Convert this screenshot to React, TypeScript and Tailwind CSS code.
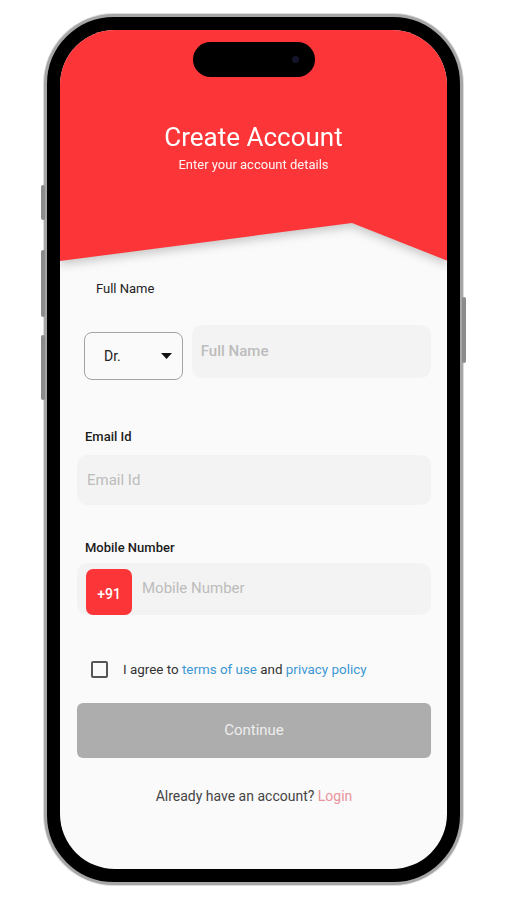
import React from "react";

function SideButton({ className }: { className: string }) {
  return <div className={"absolute w-[4px] rounded-[2px] bg-[#8c8c8c] " + className} />;
}

export default function App() {
  return (
    <div className="w-[507px] h-[900px] bg-white flex justify-center pt-[14px] font-['Roboto',sans-serif]">
      <div className="relative w-[419px] h-[871px] rounded-[70px] border-[3px] border-[#a6a6a6] shadow-[0_0_0_1px_#dcdcdc] bg-black p-[13px]">
        {/* side buttons */}
        <SideButton className="-left-[6px] top-[168px] h-[35px]" />
        <SideButton className="-left-[6px] top-[233px] h-[67px]" />
        <SideButton className="-left-[6px] top-[318px] h-[65px]" />
        <SideButton className="-right-[6px] top-[280px] h-[66px]" />

        <div className="relative w-full h-full rounded-[55px] overflow-hidden bg-[#fafafa] flex flex-col">
          {/* dynamic island */}
          <div className="absolute top-[12px] left-1/2 -translate-x-1/2 w-[122px] h-[35px] rounded-full bg-black z-10">
            <div className="absolute right-[16px] top-[14px] w-[7px] h-[7px] rounded-full bg-[#15152a]" />
          </div>

          {/* header */}
          <div className="flex flex-col drop-shadow-[0_4px_5px_rgba(0,0,0,0.2)]">
            <div className="bg-[#fc3538] h-[192px] flex flex-col items-center pt-[91px]">
              <h1 className="text-white text-[26px] leading-[32px] font-normal">Create Account</h1>
              <p className="text-white text-[13px] leading-[16px] mt-[4px] opacity-95">Enter your account details</p>
            </div>
            <svg width="388" height="40" viewBox="0 0 388 40" className="block -mt-px">
              <polygon points="0,0 388,0 388,40 292,2 0,40" fill="#fc3538" />
            </svg>
          </div>

          {/* form */}
          <div className="flex flex-col pl-[17px] pr-[16px] pt-[20px]">
            <label className="ml-[19px] text-[13px] leading-[16px] text-[#222]">Full Name</label>

            <div className="flex items-start mt-[28px]">
              <div className="ml-[7px] mt-[7px] w-[99px] h-[48px] border border-[#a3a3a3] rounded-[8px] flex items-center justify-between pl-[19px] pr-[10px]">
                <span className="text-[14px] text-[#222]">Dr.</span>
                <svg width="11" height="6" viewBox="0 0 11 6">
                  <path d="M0 0 L11 0 L5.5 6 Z" fill="#111" />
                </svg>
              </div>
              <div className="ml-[9px] w-[240px] h-[53px] rounded-[10px] bg-[#f3f3f3] flex items-center pl-[9px]">
                <span className="text-[15px] font-medium text-[#bcbcbc]">Full Name</span>
              </div>
            </div>

            <label className="mt-[49px] ml-[8px] text-[13px] leading-[16px] font-medium text-[#1c1c1c]">Email Id</label>
            <div className="mt-[10px] h-[50px] rounded-[10px] bg-[#f3f3f3] flex items-center pl-[10px]">
              <span className="text-[15px] text-[#bcbcbc]">Email Id</span>
            </div>

            <label className="mt-[35px] ml-[8px] text-[13px] leading-[16px] font-medium text-[#1c1c1c]">Mobile Number</label>
            <div className="mt-[7px] h-[52px] rounded-[10px] bg-[#f3f3f3] flex items-end pl-[9px]">
              <div className="w-[46px] h-[46px] rounded-[7px] bg-[#fc3538] flex items-center justify-center pt-[5px]">
                <span className="text-white text-[14px] font-medium">+91</span>
              </div>
              <span className="self-center -mt-[2px] ml-[10px] text-[15px] text-[#bcbcbc]">Mobile Number</span>
            </div>

            <div className="mt-[46px] flex items-center ml-[14px]">
              <div className="w-[17px] h-[17px] border-2 border-[#555] rounded-[2px]" />
              <p className="ml-[15px] text-[13.4px] leading-[17px] text-[#333]">
                I agree to <span className="text-[#3a97d4]">terms of use</span> and{" "}
                <span className="text-[#3a97d4]">privacy policy</span>
              </p>
            </div>

            <button className="mt-[25px] h-[55px] w-full rounded-[6px] bg-[#adadad] text-[#eeeeee] text-[15px]">
              Continue
            </button>

            <p className="mt-[28px] text-center text-[14px] leading-[20px] text-[#444]">
              Already have an account? <span className="text-[#e9939b]">Login</span>
            </p>
          </div>
        </div>
      </div>
    </div>
  );
}
